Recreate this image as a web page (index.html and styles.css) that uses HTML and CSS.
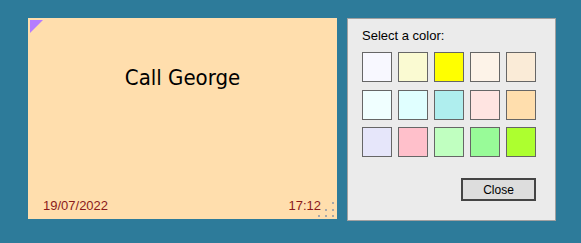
FILE: index.html
```html
<!DOCTYPE html>
<html lang="en">
<head>
    <meta charset="UTF-8">
    <title>Sticky note</title>
    <link rel="stylesheet" href="styles.css">
</head>
<body>
    <div class="desk">
        <div class="note">
            <span class="note-corner"></span>
            <p class="note-text">Call George</p>
            <div class="note-footer">
                <span>19/07/2022</span>
                <span>17:12</span>
            </div>
            <svg class="grip" width="17" height="18" viewBox="0 0 17 18">
                <g fill="#a8a8a8">
                    <rect x="15" y="2" width="2" height="2"/>
                    <rect x="8" y="9" width="2" height="2"/>
                    <rect x="15" y="9" width="2" height="2"/>
                    <rect x="1" y="15" width="2" height="2"/>
                    <rect x="8" y="15" width="2" height="2"/>
                    <rect x="15" y="15" width="2" height="2"/>
                </g>
            </svg>
        </div>

        <div class="picker">
            <p class="picker-title">Select a color:</p>
            <div class="swatches">
                <button class="swatch" style="background:#f8f8ff"></button>
                <button class="swatch" style="background:#fafad2"></button>
                <button class="swatch" style="background:#ffff00"></button>
                <button class="swatch" style="background:#fdf3e8"></button>
                <button class="swatch" style="background:#faebd7"></button>
                <button class="swatch" style="background:#f0ffff"></button>
                <button class="swatch" style="background:#e0ffff"></button>
                <button class="swatch" style="background:#afeeee"></button>
                <button class="swatch" style="background:#ffe4e1"></button>
                <button class="swatch" style="background:#ffdead"></button>
                <button class="swatch" style="background:#e6e6fa"></button>
                <button class="swatch" style="background:#ffc0cb"></button>
                <button class="swatch" style="background:#c0ffc0"></button>
                <button class="swatch" style="background:#98fb98"></button>
                <button class="swatch" style="background:#adff2f"></button>
            </div>
            <div class="picker-actions">
                <button class="close-btn">Close</button>
            </div>
        </div>
    </div>
</body>
</html>
```

FILE: styles.css
```css
body {
    margin: 0;
    padding: 18px 0 0 28px;
    background-color: #2d7b9a;
    font-family: "Liberation Sans", Arial, sans-serif;
    height: 243px;
    box-sizing: border-box;
    overflow: hidden;
}
.desk {
    display: flex;
    align-items: flex-start;
    gap: 10px;
}
.note {
    position: relative;
    width: 309px;
    height: 201px;
    background-color: #ffdead;
    display: flex;
    flex-direction: column;
    box-sizing: border-box;
}
.note-corner {
    position: absolute;
    left: 2px;
    top: 2px;
    width: 0;
    height: 0;
    border-top: 13px solid #b47cff;
    border-right: 13px solid transparent;
}
.note-text {
    margin: 47px 0 0;
    text-align: center;
    font-family: "Comic Sans MS", "DejaVu Sans Condensed", "DejaVu Sans", sans-serif;
    font-size: 22px;
    color: #000000;
    flex: 1;
}
.note-footer {
    display: flex;
    justify-content: space-between;
    padding: 0 16px 6px 15px;
    font-size: 13px;
    color: #8b1a1a;
}
.grip {
    position: absolute;
    right: 3px;
    bottom: 1px;
}
.picker {
    width: 209px;
    height: 203px;
    box-sizing: border-box;
    background-color: #ebebeb;
    border: 1px solid #a0a0a0;
    padding: 9px 0 0 14px;
}
.picker-title {
    margin: 0 0 9px;
    font-size: 13px;
    color: #000000;
}
.swatches {
    display: grid;
    grid-template-columns: repeat(5, 30px);
    grid-auto-rows: 30px;
    column-gap: 6px;
    row-gap: 7.5px;
}
.swatch {
    margin: 0;
    padding: 0;
    border: 1px solid #666666;
    cursor: pointer;
}
.picker-actions {
    display: flex;
    justify-content: flex-end;
    padding: 21px 19px 0 0;
}
.close-btn {
    width: 75px;
    height: 23px;
    box-sizing: border-box;
    border: 2px solid #444444;
    background-color: #dddddd;
    font-family: "Liberation Sans", Arial, sans-serif;
    font-size: 12px;
    color: #000000;
    padding: 0;
}
```
